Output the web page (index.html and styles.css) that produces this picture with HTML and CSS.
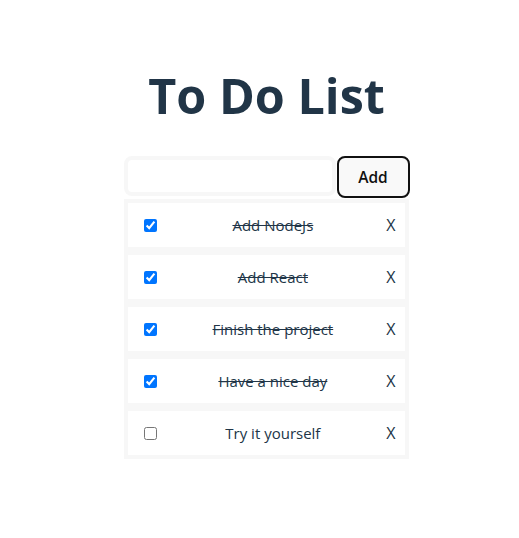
FILE: index.html
```html
<!DOCTYPE html>
<html lang="en">
<head>
<meta charset="utf-8">
<title>To Do List</title>
<link rel="stylesheet" href="styles.css">
</head>
<body>
<div class="app">
  <h1 class="title">To Do List</h1>
  <div class="todo">
    <form class="add-row" onsubmit="return false">
      <input class="add-input" type="text">
      <button class="add-btn" type="submit">Add</button>
    </form>
    <ul class="list">
      <li class="item"><input type="checkbox" checked><span class="text done">Add NodeJs</span><span class="del">X</span></li>
      <li class="item"><input type="checkbox" checked><span class="text done">Add React</span><span class="del">X</span></li>
      <li class="item"><input type="checkbox" checked><span class="text done">Finish the project</span><span class="del">X</span></li>
      <li class="item"><input type="checkbox" checked><span class="text done">Have a nice day</span><span class="del">X</span></li>
      <li class="item"><input type="checkbox"><span class="text">Try it yourself</span><span class="del">X</span></li>
    </ul>
  </div>
</div>
</body>
</html>
```

FILE: styles.css
```css
html, body {
  margin: 0;
  background: #ffffff;
}
body {
  font-family: "Segoe UI", "Open Sans", "Noto Sans", sans-serif;
  color: #213547;
  font-size: 16px;
}
.app {
  display: flex;
  flex-direction: column;
  align-items: center;
  padding: 68px 0 0 14px;
}
.title {
  margin: 0 0 34px;
  font-size: 48.5px;
  line-height: 54px;
  font-weight: 700;
  color: #213547;
}
.todo {
  width: 286px;
}
.add-row {
  display: flex;
  gap: 1px;
  margin: 0;
}
.add-input {
  width: 212px;
  height: 40px;
  box-sizing: border-box;
  border: 4px solid #f7f7f7;
  border-radius: 8px;
  background: #fff;
  outline: none;
  font: inherit;
}
.add-btn {
  width: 73px;
  height: 42px;
  box-sizing: border-box;
  border: 2px solid #111;
  border-radius: 8px;
  background: #f9f9f9;
  color: #111;
  font: inherit;
  font-size: 15.5px;
  font-weight: 600;
  padding: 0;
}
.list {
  list-style: none;
  margin: 1px 0 0;
  padding: 0;
  width: 285px;
}
.item {
  display: flex;
  align-items: center;
  justify-content: space-between;
  height: 52px;
  box-sizing: border-box;
  border: 4px solid #f7f7f7;
  padding: 0 9px 0 12px;
  background: #fff;
  line-height: 24px;
  font-size: 15px;
}
.item input {
  margin: 3px 3px 3px 4px;
  width: 13px;
  height: 13px;
}
.text.done {
  text-decoration: line-through;
}
.del {
  font-size: 16px;
}
```
